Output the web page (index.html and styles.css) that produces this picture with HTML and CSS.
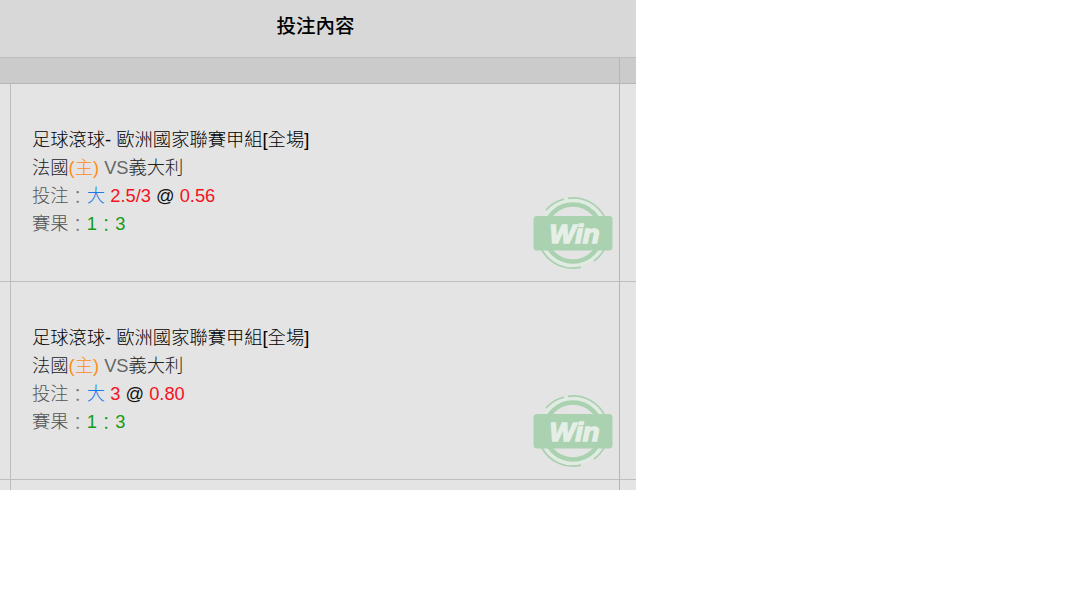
FILE: index.html
```html
<!DOCTYPE html>
<html lang="zh-Hant">
<head>
  <meta charset="UTF-8">
  <meta name="viewport" content="width=device-width, initial-scale=1.0">
  <title>投注內容</title>
  <link rel="stylesheet" href="styles.css">
</head>
<body>
  <svg class="symbols" aria-hidden="true">
    <symbol id="win" viewBox="0 0 80 74">
      <g fill="none" stroke="#aad1b0">
        <circle cx="40" cy="37" r="32" stroke="#e0ebe2" stroke-width="4"/>
        <circle cx="40" cy="37" r="28.5" stroke-width="4.4"/>
        <path stroke-width="1.7" d="M13 14A35 35 0 0 1 31 3.2M35 2.3A35 35 0 0 1 72 22M72 52A35 35 0 0 1 61 65M48 71.1A35 35 0 0 1 9 54"/>
      </g>
      <rect x="0.5" y="20" width="79" height="34.5" rx="3.5" fill="#aad1b0"/>
      <text x="41.5" y="46.5" text-anchor="middle" textLength="50" lengthAdjust="spacingAndGlyphs">Win</text>
    </symbol>
  </svg>

  <main class="panel">
    <header>投注內容</header>
    <div class="row subhead">
      <div class="side"></div>
      <div class="content"></div>
    </div>

    <div class="row bet">
      <div class="side"></div>
      <div class="content">
        <p class="league">足球滾球- 歐洲國家聯賽甲組[全場]</p>
        <p class="teams">法國<span class="home">(主)</span> <span class="vs">VS</span>義大利</p>
        <p class="label">投注<span class="colon">：</span><span class="pick">大</span> <span class="odds">2.5/3</span> <span class="at">@</span> <span class="odds">0.56</span></p>
        <p class="label">賽果<span class="colon">：</span><span class="score">1<span class="colon">：</span>3</span></p>
        <svg class="stamp"><use href="#win"/></svg>
      </div>
    </div>

    <div class="row bet">
      <div class="side"></div>
      <div class="content">
        <p class="league">足球滾球- 歐洲國家聯賽甲組[全場]</p>
        <p class="teams">法國<span class="home">(主)</span> <span class="vs">VS</span>義大利</p>
        <p class="label">投注<span class="colon">：</span><span class="pick">大</span> <span class="odds">3</span> <span class="at">@</span> <span class="odds">0.80</span></p>
        <p class="label">賽果<span class="colon">：</span><span class="score">1<span class="colon">：</span>3</span></p>
        <svg class="stamp"><use href="#win"/></svg>
      </div>
    </div>

    <div class="row rest">
      <div class="side"></div>
      <div class="content"></div>
    </div>
  </main>
</body>
</html>
```

FILE: styles.css
```css
* {
  box-sizing: border-box;
}
body {
  margin: 0;
  background: #fff;
  font-family: "Liberation Sans", "Noto Sans CJK TC", sans-serif;
  font-size: 18.3px;
  font-weight: 300;
}
.symbols {
  display: none;
}
.panel {
  width: 636px;
  height: 490px;
  overflow: hidden;
  background: #e4e4e4;
}
header {
  height: 57px;
  padding: 12px 5px 0 0;
  background: #d8d8d8;
  color: #000;
  font-size: 19.5px;
  font-weight: 500;
  line-height: 28px;
  text-align: center;
}
.row {
  display: grid;
  grid-template-columns: 10px 610px 1fr;
  border-bottom: 1px solid #bebebe;
}
.content {
  position: relative;
  border-left: 1px solid #bebebe;
  border-right: 1px solid #b6b6b6;
}
.subhead {
  height: 27px;
  background: #cbcbcb;
  border-top: 1px solid #bdbdbd;
  border-bottom-color: #b5b5b5;
}
.subhead .content {
  border-left: none;
}
.bet {
  height: 198px;
}
.bet .content {
  padding: 42px 21px 0;
}
.rest {
  height: 10px;
  border-bottom: none;
}
p {
  margin: 0;
  height: 28px;
  line-height: 28px;
  white-space: nowrap;
}
.league {
  color: #000;
}
.teams {
  color: #222;
}
.vs {
  color: #666;
}
.label {
  color: #555;
}
.home {
  color: #ff8c1a;
}
.pick {
  color: #1a7be8;
}
.odds {
  color: #f5121d;
}
.at {
  color: #111;
}
.score {
  color: #169b16;
}
.colon {
  position: relative;
  top: 2px;
}
.label > .colon {
  color: #777;
}
.stamp {
  position: absolute;
  right: 6px;
  bottom: 11px;
  width: 80px;
  height: 74px;
}
#win text {
  font-family: "Liberation Sans", sans-serif;
  font-size: 25px;
  font-style: italic;
  font-weight: 700;
  fill: #e6efe7;
  stroke: #e6efe7;
  stroke-width: 1.4px;
}
```
